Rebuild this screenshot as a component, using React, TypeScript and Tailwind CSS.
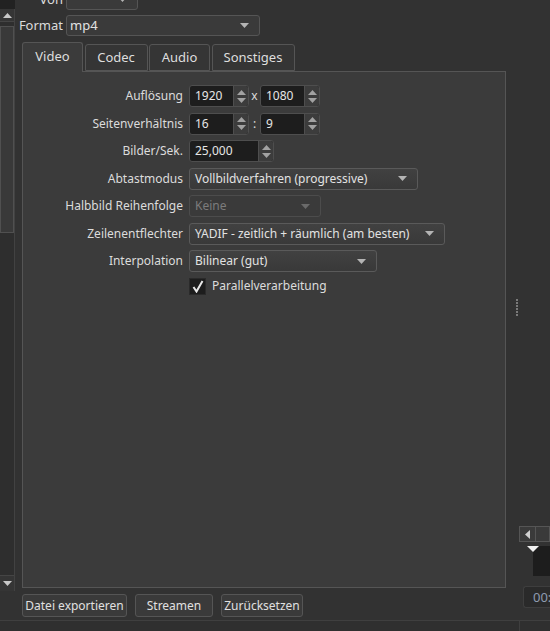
import React from "react";

const FONT = "font-['Noto_Sans','Open_Sans',sans-serif]";

function DownTri({ className = "" }: { className?: string }) {
  return (
    <svg width="9" height="5" viewBox="0 0 9 5" className={`shrink-0 ${className}`}>
      <path d="M0 0 L9 0 L4.5 5 Z" fill="currentColor" />
    </svg>
  );
}

function Combo({ width, value, disabled }: { width: number; value: string; disabled?: boolean }) {
  return (
    <div
      style={{ width }}
      className={`h-[22px] flex items-center justify-between rounded-[3px] border pl-[5px] pr-[10px] ${
        disabled
          ? "border-[#4c4c4c] bg-[#3a3a3a] text-[#7c7c7c]"
          : "border-[#5a5a5a] bg-gradient-to-b from-[#414141] to-[#393939] text-[#e2e2e2]"
      }`}
    >
      <span className="whitespace-nowrap leading-[18px]">{value}</span>
      <DownTri className={disabled ? "text-[#6a6a6a]" : "text-[#b4b4b4]"} />
    </div>
  );
}

function Spin({ width, value }: { width: number; value: string }) {
  return (
    <div
      style={{ width }}
      className="h-[22px] flex rounded-[3px] border border-[#4e4e4e] bg-[#1d1d1d] overflow-hidden"
    >
      <span className="flex-1 flex items-center pl-[5px] text-[#e6e6e6]">{value}</span>
      <div className="w-[15px] flex flex-col items-center justify-center gap-[3px] bg-[#3c3c3c] border-l border-[#4e4e4e]">
        <svg width="9" height="5" viewBox="0 0 9 5">
          <path d="M0 5 L9 5 L4.5 0 Z" fill="#a2a2a2" />
        </svg>
        <svg width="9" height="5" viewBox="0 0 9 5">
          <path d="M0 0 L9 0 L4.5 5 Z" fill="#a2a2a2" />
        </svg>
      </div>
    </div>
  );
}

function Label({ children }: { children: React.ReactNode }) {
  return <div className="h-[22px] flex items-center justify-end text-[#dcdcdc]">{children}</div>;
}

function Tab({ label, width, active }: { label: string; width: number; active?: boolean }) {
  return (
    <div
      style={{ width }}
      className={`flex items-center justify-center border border-[#555555] rounded-t-[3px] text-[#dedede] ${
        active ? "h-[30px] bg-[#3b3b3b] border-b-0 relative z-10 mb-[-1px] pb-[3px]" : "h-[27px] bg-[#353535]"
      }`}
    >
      {label}
    </div>
  );
}

function Button({ label, width }: { label: string; width: number }) {
  return (
    <div
      style={{ width }}
      className="h-[23px] flex items-center justify-center rounded-[3px] border border-[#555555] bg-[#3a3a3a] text-[#e0e0e0] whitespace-nowrap"
    >
      {label}
    </div>
  );
}

export default function App() {
  return (
    <div className={`w-[550px] h-[631px] overflow-hidden bg-[#323232] flex flex-col text-[12px] leading-none ${FONT}`}>
      <div className="flex h-[620px] shrink-0">
        {/* left scroll bar */}
        <div className="w-[15px] shrink-0 flex flex-col">
          <div className="h-[9px] bg-[#222222]" />
          <div className="flex-1 flex flex-col border-r border-[#424242] bg-[#2e2e2e]">
            <div className="h-[13px] flex items-center justify-center bg-[#353535] border-b border-[#454545]">
              <svg width="9" height="5" viewBox="0 0 9 5">
                <path d="M0 5 L9 5 L4.5 0 Z" fill="#c8c8c8" />
              </svg>
            </div>
            <div className="mt-[4px] h-[207px] bg-[#393939] border border-[#505050]" />
            <div className="flex-1" />
            <div className="h-[16px] flex items-center justify-center bg-[#353535] border-t border-[#454545]">
              <svg width="9" height="5" viewBox="0 0 9 5">
                <path d="M0 0 L9 0 L4.5 5 Z" fill="#c8c8c8" />
              </svg>
            </div>
          </div>
          <div className="h-[29px]" />
        </div>

        {/* main column */}
        <div className="w-[491px] shrink-0 pl-[7px] flex flex-col">
          <div className="grid grid-cols-[41px_auto] gap-x-[3px] gap-y-[5px] mt-[-11px] items-center">
            <div className="h-[21px] flex items-center justify-end text-[#dcdcdc] text-[13px]">Von</div>
            <div className="w-[72px] h-[21px] flex items-center justify-end pr-[10px] rounded-[3px] border border-[#555555] bg-[#3a3a3a]">
              <DownTri className="text-[#b4b4b4]" />
            </div>
            <div className="h-[21px] flex items-center justify-end text-[#dcdcdc] text-[13px]">Format</div>
            <div className="w-[194px] h-[21px] flex items-center justify-between pl-[3px] pr-[10px] rounded-[3px] border border-[#555555] bg-[#3a3a3a] text-[#e2e2e2] text-[13px]">
              <span>mp4</span>
              <DownTri className="text-[#b4b4b4]" />
            </div>
          </div>

          <div className="mt-[6px] flex items-end gap-[1.5px] text-[13px]">
            <Tab label="Video" width={61} active />
            <Tab label="Codec" width={63} />
            <Tab label="Audio" width={61} />
            <Tab label="Sonstiges" width={83} />
          </div>

          <div className="w-[484px] h-[517px] border border-[#555555] bg-[#3b3b3b] pt-[13px]">
            <div className="grid grid-cols-[160px_auto] gap-x-[6px] gap-y-[5.5px] items-center">
              <Label>Auflösung</Label>
              <div className="flex items-center">
                <Spin width={60} value="1920" />
                <span className="w-[11px] text-center text-[#dcdcdc]">x</span>
                <Spin width={60} value="1080" />
              </div>

              <Label>Seitenverhältnis</Label>
              <div className="flex items-center">
                <Spin width={60} value="16" />
                <span className="w-[11px] text-center text-[#dcdcdc]">:</span>
                <Spin width={60} value="9" />
              </div>

              <Label>Bilder/Sek.</Label>
              <div className="flex">
                <Spin width={85} value="25,000" />
              </div>

              <Label>Abtastmodus</Label>
              <Combo width={229} value="Vollbildverfahren (progressive)" />

              <Label>Halbbild Reihenfolge</Label>
              <Combo width={132} value="Keine" disabled />

              <Label>Zeilenentflechter</Label>
              <Combo width={256} value="YADIF - zeitlich + räumlich (am besten)" />

              <Label>Interpolation</Label>
              <Combo width={188} value="Bilinear (gut)" />

              <div />
              <div className="flex items-center gap-[6px] h-[17px] text-[#dcdcdc]">
                <div className="w-[17px] h-[17px] bg-[#1d1d1d] border border-[#2a2a2a] flex items-center justify-center">
                  <svg width="12" height="13" viewBox="0 0 12 13">
                    <path d="M1.5 7 L4.5 11.5 L10.5 1" fill="none" stroke="#e8e8e8" strokeWidth="2" />
                  </svg>
                </div>
                <span>Parallelverarbeitung</span>
              </div>
            </div>
          </div>

          <div className="mt-[6px] flex gap-[8px]">
            <Button label="Datei exportieren" width={105} />
            <Button label="Streamen" width={78} />
            <Button label="Zurücksetzen" width={82} />
          </div>
        </div>

        {/* splitter */}
        <div className="w-[13px] shrink-0 flex items-center justify-start pl-[10px]">
          <div className="flex flex-col gap-[1px] mt-[-6px]">
            {[0, 1, 2, 3, 4, 5].map((i) => (
              <div key={i} className="w-[2px] h-[2px] bg-[#7a7a7a]" />
            ))}
          </div>
        </div>

        {/* right panel */}
        <div className="w-[31px] shrink-0 overflow-hidden flex flex-col pt-[526px]">
          <div className="h-[16px] flex">
            <div className="w-[17px] h-[16px] flex items-center justify-center bg-[#3a3a3a] border border-[#555555]">
              <svg width="5" height="9" viewBox="0 0 5 9">
                <path d="M5 0 L5 9 L0 4.5 Z" fill="#cfcfcf" />
              </svg>
            </div>
            <div className="flex-1 h-[16px] bg-[#3a3a3a] border border-[#555555] border-l-0" />
          </div>
          <div className="flex mt-[4px]">
            <div className="w-[8px] shrink-0" />
            <svg width="12" height="6" viewBox="0 0 12 6" className="shrink-0 relative z-10">
              <path d="M0 0 L12 0 L6 6 Z" fill="#f0f0f0" />
            </svg>
          </div>
          <div className="ml-[14px] mt-[-6px] h-[30px] bg-[#1d1d1d]" />
          <div className="ml-[4px] mt-[10px] h-[22px] flex items-center pl-[9px] rounded-l-[3px] bg-[#2a2a2a] border border-[#3e3e3e] border-r-0 text-[13px] text-[#8e9bb0]">
            00:
          </div>
        </div>
      </div>
      <div className="flex-1 border-t border-[#3f3f3f] bg-[#2f2f2f] flex">
        <div className="w-[520px] border-r border-[#3f3f3f]" />
      </div>
    </div>
  );
}
